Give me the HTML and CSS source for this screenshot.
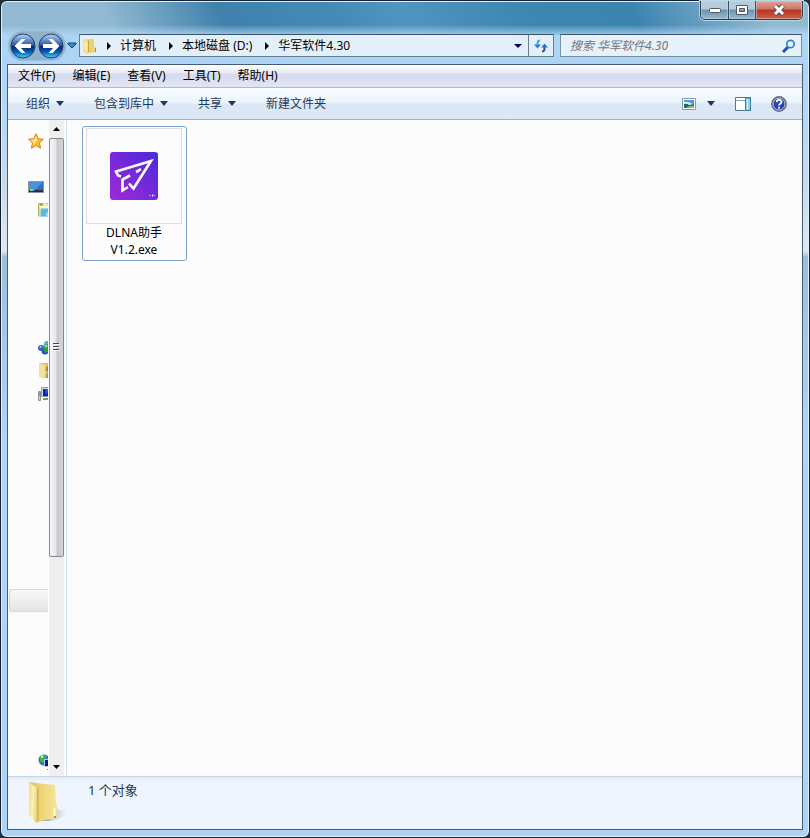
FILE: index.html
```html
<!DOCTYPE html>
<html lang="zh-CN">
<head>
<meta charset="utf-8">
<meta name="viewport" content="width=device-width, initial-scale=1">
<title>华军软件4.30</title>
<link rel="stylesheet" href="styles.css">
</head>
<body>
<div class="window">
  <header class="titlebar">
    <div class="controls">
      <button type="button" aria-label="最小化"><svg width="14" height="8" viewBox="0 0 14 8"><rect x="1.500" y="2.500" width="11" height="4" rx="1" fill="#fff" stroke="#4d5867"/></svg></button>
      <button type="button" aria-label="最大化"><svg width="14" height="12" viewBox="0 0 14 12"><path d="M1.500 1.500h11v9h-11zM4.500 4.500v3h5v-3z" fill="#fff" fill-rule="evenodd" stroke="#4d5867"/></svg></button>
      <button type="button" class="close" aria-label="关闭"><svg width="14" height="12" viewBox="0 0 14 12"><path d="M3 2l8 8M11 2l-8 8" stroke="#594850" stroke-width="5"/><path d="M3 2l8 8M11 2l-8 8" stroke="#fff" stroke-width="3"/></svg></button>
    </div>
  </header>

  <div class="navbar">
    <div class="travel">
      <svg class="disc-defs" width="0" height="0" aria-hidden="true"><defs>
        <linearGradient id="disc" x2="0" y2="1"><stop stop-color="#bdd3ef"/><stop offset=".25" stop-color="#6a91cb"/><stop offset=".49" stop-color="#244f9d"/><stop offset=".52" stop-color="#09276e"/><stop offset=".75" stop-color="#075bb4"/><stop offset="1" stop-color="#3edcff"/></linearGradient>
        <linearGradient id="gold" x2="1"><stop stop-color="#dfbd5c"/><stop offset=".5" stop-color="#f0d67b"/><stop offset="1" stop-color="#f7e494"/></linearGradient>
        <linearGradient id="cover" x2="1" y2=".3"><stop stop-color="#f3dc83"/><stop offset=".6" stop-color="#fbf0b6"/><stop offset="1" stop-color="#efd677"/></linearGradient>
      </defs></svg>
      <button type="button" aria-label="后退"><svg width="26" height="26" viewBox="0 0 26 26"><circle cx="13" cy="13" r="12" fill="url(#disc)" stroke="#243e76"/><path d="M4.500 13l7-7h4l-4.500 5h10v4h-10l4.500 5h-4z" fill="#fff"/></svg></button>
      <button type="button" aria-label="前进"><svg width="26" height="26" viewBox="0 0 26 26"><circle cx="13" cy="13" r="12" fill="url(#disc)" stroke="#243e76"/><path d="M21.500 13l-7-7h-4l4.500 5h-10v4h10l-4.500 5h4z" fill="#fff"/></svg></button>
    </div>
    <button type="button" class="recent" aria-label="最近的页面"><svg width="10" height="7" viewBox="0 0 10 7"><path d="M1 1h8v1L5 6 1 2z" fill="#468ac6" stroke="#123f6e"/></svg></button>
    <nav class="address" aria-label="地址">
      <svg class="folder" width="14" height="16" viewBox="0 0 14 16"><path d="M3 1h7l1 1v12l-6 1z" fill="#ecd174"/><path d="M5 3l1-1v12l-1 1z" fill="#c9a643"/><path d="M0 1l5 1v14l-5-2z" fill="#f3dd88"/><path d="M1 3l3 1v9l-3-1z" fill="#f9eaa9"/><path d="M10 8l3 1v5l-3 1z" fill="#f0d57c"/><path d="M12.500 10v4" stroke="#4ba0dd"/></svg>
      <svg class="chev" width="4" height="8" viewBox="0 0 4 8"><path d="M0 0l4 4-4 4z"/></svg>
      <a href="#">计算机</a>
      <svg class="chev" width="4" height="8" viewBox="0 0 4 8"><path d="M0 0l4 4-4 4z"/></svg>
      <a href="#">本地磁盘 (D:)</a>
      <svg class="chev" width="4" height="8" viewBox="0 0 4 8"><path d="M0 0l4 4-4 4z"/></svg>
      <a href="#">华军软件4.30</a>
      <button type="button" class="history" aria-label="以前的位置"><svg width="8" height="4" viewBox="0 0 8 4"><path d="M0 0h8L4 4z" fill="#000062"/></svg></button>
      <button type="button" class="refresh" aria-label="刷新"><svg width="14" height="14" viewBox="0 0 14 14"><path d="M6 1.500C3.500 1.500 3.500 3 3.500 6" fill="none" stroke="#3fa3dc" stroke-width="2"/><path d="M0 5.500h7l-3.500 4z" fill="#2b7fca"/><path d="M8 12.500c2.500 0 2.500-1.500 2.500-4.500" fill="none" stroke="#2a4fa4" stroke-width="2"/><path d="M7 8.500h7l-3.500-4z" fill="#2f74c4"/></svg></button>
    </nav>
    <label class="search">
      <input type="text" aria-label="搜索" placeholder="搜索 华军软件4.30">
      <svg width="14" height="14" viewBox="0 0 14 14"><path d="M1 13l5-5" stroke="#2351a7" stroke-width="3"/><circle cx="8.500" cy="5" r="3.700" fill="#e9f7ff" stroke="#3181ca" stroke-width="1.700"/></svg>
    </label>
  </div>

  <div class="client">
    <nav class="menu" aria-label="菜单">
      <button type="button">文件(F)</button>
      <button type="button">编辑(E)</button>
      <button type="button">查看(V)</button>
      <button type="button">工具(T)</button>
      <button type="button">帮助(H)</button>
    </nav>

    <div class="toolbar">
      <button type="button">组织<svg width="8" height="5" viewBox="0 0 8 5"><path d="M0 0h8L4 5z"/></svg></button>
      <button type="button">包含到库中<svg width="8" height="5" viewBox="0 0 8 5"><path d="M0 0h8L4 5z"/></svg></button>
      <button type="button">共享<svg width="8" height="5" viewBox="0 0 8 5"><path d="M0 0h8L4 5z"/></svg></button>
      <button type="button">新建文件夹</button>
      <div class="views">
        <button type="button" aria-label="更改视图"><svg width="14" height="12" viewBox="0 0 14 12"><path d="M.5.5h13v11H.5z" fill="#fff" stroke="#8b98a8"/><path d="M2 2h10v8H2z" fill="#4a9bdc"/><path d="M2 4q5-1 10 3v1H2z" fill="#d8f2fc"/><path d="M2 6q3-1 5 1l5-1v4H2z" fill="#27665b"/><path d="M4 10q3-3 8-2v2z" fill="#83bd72"/></svg></button>
        <button type="button" aria-label="更多选项"><svg width="8" height="5" viewBox="0 0 8 5"><path d="M0 0h8L4 5z"/></svg></button>
        <button type="button" aria-label="预览窗格"><svg width="16" height="14" viewBox="0 0 16 14"><path d="M.5.500h15v13H.5z" fill="#fff" stroke="#55779b"/><path d="M1 3.500h9" stroke="#8a9caf"/><path d="M10.500 1v12.500h5V1z" fill="#8fd5ec" stroke="#477895"/><path d="M12.500 2v10" stroke="#d2f5fc"/></svg></button>
        <button type="button" aria-label="帮助"><svg width="16" height="16" viewBox="0 0 16 16"><circle cx="8" cy="8" r="7.200" fill="#2849b5" stroke="#686d7c" stroke-width="1.400"/><circle cx="8" cy="8" r="6" fill="#2445b4" stroke="#c3c9db"/><path d="M5.700 6.200c0-3 4.800-3 4.800-.2C10.500 8 8 7.600 8 9.500M8 10.800v1.700" fill="none" stroke="#fff" stroke-width="1.800"/></svg></button>
      </div>
    </div>

    <div class="body">
      <aside class="sidebar">
        <ul class="tree">
          <li class="favorites"><a href="#" aria-label="收藏夹"><svg width="16" height="16" viewBox="0 0 16 16"><path d="M8 .7l2.200 5 5.200.5-3.900 3.700 1.100 5.300L8 12.500l-4.600 2.700 1.100-5.300L.6 6.200l5.200-.5z" fill="#ffb92e" stroke="#d9812b"/><path d="M8 3l1.500 4-5 6 1.200-3.500L2.500 7l4-.5z" fill="#ffe992"/></svg></a></li>
          <li class="desktop"><a href="#" aria-label="桌面"><svg width="16" height="14" viewBox="0 0 16 14"><path d="M.5 1.500h15v11H.5z" fill="#2f6fc0" stroke="#8a949e"/><path d="M1 2h14L7 10H1z" fill="#4b91dd"/><path d="M1 10h14v2H1z" fill="#233142"/><path d="M2 9h2v2H2z" fill="#8be261"/><path d="M4 9h2v2H4z" fill="#51bdf0"/></svg></a></li>
          <li class="library child"><a href="#" aria-label="库"><svg width="16" height="16" viewBox="0 0 16 16"><path d="M.5 3V1.500h9L11 3h4v11H.5z" fill="#f0dc85" stroke="#c4ab50"/><path d="M2 2.500h7" stroke="#fff7c4" stroke-width="2"/><path d="M2 2.500h3" stroke="#58b947" stroke-width="2"/><path d="M2 5h12" stroke="#fff7c4" stroke-width="2"/><path d="M2.500 14.500V8l2-1.500h11V11h-7v3.500z" fill="#63b6dc" stroke="#9dd9ef"/></svg></a></li>
          <li class="homegroup child"><a href="#" aria-label="家庭组"><svg width="16" height="16" viewBox="0 0 16 16"><circle cx="9" cy="4" r="3" fill="#6da1dd"/><circle cx="3" cy="8" r="3" fill="#3663b7"/><circle cx="7" cy="11" r="3.500" fill="#2a56b8"/><circle cx="9" cy="8" r="4" fill="#27a044"/><circle cx="8" cy="6" r="1.500" fill="#9be28c"/><circle cx="2.500" cy="7" r="1" fill="#b2d5ff"/></svg></a></li>
          <li class="user child"><a href="#" aria-label="用户文件夹"><svg width="16" height="16" viewBox="0 0 16 16"><path d="M1 0h9l1 1h4v14H6z" fill="#e1c168"/><path d="M1 0l6 2v14l-6-2z" fill="#f5e193"/><circle cx="11" cy="6" r="3" fill="#a67f53"/><path d="M8 15c0-8 7-8 7 0z" fill="#65a996"/></svg></a></li>
          <li class="computer child"><a href="#" aria-label="计算机"><svg width="16" height="16" viewBox="0 0 16 16"><path d="M.5 5.500h2v9h-2z" fill="#ccd2d4" stroke="#8a9296"/><path d="M1 7h1M1 9h1" stroke="#547553"/><path d="M3.500 1.500h12v9h-12z" fill="#d6dadd" stroke="#929aa3"/><path d="M5 3h10v7H5z" fill="#081eb4"/><path d="M7 3h5l-4 6z" fill="#2f50d8"/><path d="M5 12h9v2H5z" fill="#858d94"/></svg></a></li>
          <li class="current" aria-current="true"><a href="#" aria-label="华军软件4.30"></a></li>
          <li class="network child"><a href="#" aria-label="网络"><svg width="16" height="16" viewBox="0 0 16 16"><circle cx="6" cy="6" r="5.500" fill="#2676c9"/><path d="M2 3l4-2 3 2-2 2-2 4-3-2zM6 9l4-2v4H7z" fill="#3cbd52"/><path d="M3 3l2-1" stroke="#c5f5e9" stroke-width="2"/><path d="M6.500 5.500h9v7h-9z" fill="#071794" stroke="#bfcbd8"/><path d="M9 15.500h6" stroke="#667384"/></svg></a></li>
        </ul>
        <div class="scrollbar">
          <button type="button" aria-label="向上滚动"><svg width="7" height="4" viewBox="0 0 7 4"><path d="M0 4h7L3.500 0z"/></svg></button>
          <div class="track"><div class="thumb"><svg width="7" height="9" viewBox="0 0 7 9"><path d="M0 .5h6M0 3.500h6M0 6.500h6" stroke="#45454b"/><path d="M1 1.500h6M1 4.500h6M1 7.500h6" stroke="#f9f9fa"/></svg></div></div>
          <button type="button" aria-label="向下滚动"><svg width="7" height="4" viewBox="0 0 7 4"><path d="M0 0h7L3.500 4z"/></svg></button>
        </div>
      </aside>
      <main class="files">
        <button type="button" class="file">
          <span class="thumbnail"><svg width="48" height="48" viewBox="0 0 48 48"><defs><linearGradient id="app" x1="0" y1="1" x2="1" y2="0"><stop stop-color="#a128d8"/><stop offset="1" stop-color="#4a2bdb"/></linearGradient></defs><rect width="48" height="48" rx="3" fill="url(#app)"/><path d="M11 24.500L8 23.500 6 19.500 41 9 23.500 36.500 19 31.500M20 23.500L12.500 27.500V38.500L18 35M26 20l3-1.500M28.500 18.500l2.500-1.500" fill="none" stroke="#fff" stroke-width="2.600"/><path d="M39 43.500h2M42 43.500h3M42.500 42v3" stroke="#d8b9fa" stroke-opacity=".8"/></svg></span>
          <span class="filename">DLNA助手<br>V1.2.exe</span>
        </button>
      </main>
    </div>

    <footer class="details">
      <svg width="40" height="44" viewBox="0 0 40 44"><defs><linearGradient id="shade" x2="1"><stop stop-color="#777f89" stop-opacity=".8"/><stop offset="1" stop-color="#a7b4c4" stop-opacity="0"/></linearGradient></defs><path d="M13 40l14-13 13 4q-5 7-18 9z" fill="url(#shade)"/><path d="M1 1l15 2 11 1 1 20 1 3v10l-3 2-5-1-12 3z" fill="url(#gold)"/><path d="M1 1l8 6v36l-8-9z" fill="url(#cover)"/><path d="M9.500 7v34" stroke="#d3b156"/><path d="M10 7l1 1v32l-1 1z" fill="#dfbf60"/><path d="M25 25l4-1v13l-3 1z" fill="#f5df8c"/><path d="M26.500 27v8" stroke="#fff9dc" stroke-width="2"/><path d="M26 36h2" stroke="#56a9dd" stroke-width="2"/></svg>
      <p>1 个对象</p>
    </footer>
  </div>
</div>
</body>
</html>
```
FILE: styles.css
```css
* { box-sizing: border-box; }

body {
  margin: 0;
  background: #25313e;
  font: 12px/16px "Noto Sans", "Noto Sans CJK SC", sans-serif;
  color: #000;
}

button, input { font: inherit; color: inherit; }
button { padding: 0; border: 0; background: none; }
a { color: inherit; text-decoration: none; }
svg { display: block; flex: none; }

.window {
  display: flex;
  flex-direction: column;
  min-height: 100vh;
  padding: 0 6px 7px;
  border: 1px solid #14202e;
  border-radius: 7px;
  box-shadow: inset 0 0 0 1px #e0f2fc;
  background:
    linear-gradient(to bottom, transparent 24px, #add5f4 36px, transparent 60px) top / 100% 60px no-repeat,
    linear-gradient(65deg, transparent 14%, #3f81ab 28%, #458bb6 42%, #5095be 50%, #3f87b1 64%, #3c84b0 78%, transparent 94%) top / 100% 34px no-repeat,
    linear-gradient(to bottom, #91b9d1 0, #91b9d1 28px, #b0d6f3 40px, #add4f5 64px, #c5daee 180px, #e0e8f1 250px, #9dbddb 256px, #b0d4f8 440px, #add2f6 100%);
}

.titlebar { display: flex; justify-content: flex-end; height: 30px; }
.controls {
  display: flex;
  height: 19px;
  border: 1px solid #263e52;
  border-top: 0;
  border-radius: 0 0 5px 5px;
  overflow: hidden;
  box-shadow: 0 0 0 1px #b9d6e7;
}
.controls button {
  display: grid;
  place-items: center;
  width: 28px;
  border-right: 1px solid #344b61;
  background: linear-gradient(#b5cbd9 0 45%, #6b91aa 50%, #94bdd1);
  box-shadow: inset 0 0 0 1px #c9dce780;
}
.controls button + button { width: 27px; }
.controls button.close {
  width: 46px;
  border: 0;
  background: linear-gradient(#dea397, #cb7768 45%, #b63520 50%, #cf604b);
}

.navbar { display: flex; align-items: center; height: 33px; padding: 0 1px 4px 2px; }
.travel {
  display: flex;
  gap: 2px;
  padding: 1px;
  border-radius: 14px;
  background: #8fb2cc;
  box-shadow: 0 0 2px #688ca8;
}
.disc-defs { position: absolute; }
.recent { display: grid; place-items: center; width: 14px; height: 20px; }
.address {
  display: flex;
  flex: 1;
  align-items: center;
  height: 23px;
  border: 1px solid #667e92;
  border-top-color: #3c5468;
  background: #e4f0f9;
  white-space: nowrap;
}
.folder { margin: 0 10px 0 3px; }
.address .chev { margin: 0 9px 0 0; }
.address a { margin-right: 13px; }
.history { display: grid; place-items: center; width: 20px; height: 20px; margin-left: auto; }
.refresh {
  display: grid;
  place-items: center;
  width: 25px;
  height: 21px;
  border-left: 1px solid #667e92;
}
.search {
  display: flex;
  flex: 0 1 242px;
  align-items: center;
  height: 23px;
  margin-left: 6px;
  padding: 0 5px 0 9px;
  border: 1px solid #7891a3;
  border-top-color: #3c5468;
  background: #e6f1fa;
}
.search input {
  flex: 1;
  min-width: 0;
  padding: 0;
  border: 0;
  outline: 0;
  background: none;
  font-style: italic;
}
.search input::placeholder { color: #72777c; opacity: 1; }

.client {
  display: flex;
  flex: 1;
  flex-direction: column;
  border: 1px solid #465c70;
  background: #fcfcfc;
}
.menu {
  display: flex;
  gap: 17px;
  height: 23px;
  padding: 0 10px;
  border-bottom: 1px solid #b4b8cd;
  background: linear-gradient(#fff, #e5e9f4 8px, #d6dbed 9px, #e1e5f3);
}
.toolbar {
  display: flex;
  gap: 30px;
  height: 32px;
  padding: 0 15px 0 18px;
  border-bottom: 1px solid #a0afc3;
  background: linear-gradient(#fafdff, #e9f3fc 15px, #dce7f5 16px, #dde8f6);
  color: #1e395b;
}
.toolbar button { display: flex; align-items: center; gap: 6px; }
.toolbar svg { fill: #1e395b; }
.views { display: flex; margin-left: auto; }
.views button { margin-left: 11px; }
.views button:nth-child(n+3) { margin-left: 20px; }

.body { display: flex; flex: 1; min-height: 280px; }
.sidebar { display: flex; width: 59px; border-right: 1px solid #d1e5f5; }
.tree {
  display: grid;
  flex: 1;
  grid-auto-rows: 23px;
  align-content: start;
  margin: 0;
  padding: 9px 1px 0 1px;
  overflow: hidden;
  list-style: none;
}
.tree li { overflow: hidden; }
.tree a { display: flex; align-items: center; height: 23px; padding-left: 19px; }
.tree .child a { padding-left: 29px; }
.tree .favorites { grid-row: 1; }
.tree .desktop { grid-row: 3; }
.tree .library { grid-row: 4; }
.tree .homegroup { grid-row: 10; }
.tree .user { grid-row: 11; }
.tree .computer { grid-row: 12; }
.tree .current {
  grid-row: 21;
  border: 1px solid #d9d9d9;
  border-right: 0;
  border-radius: 3px 0 0 3px;
  background: linear-gradient(#f8f8f8, #e5e5e5);
}
.tree .network { grid-row: 28; }
.scrollbar {
  display: flex;
  flex: none;
  flex-direction: column;
  width: 15px;
  margin-right: 2px;
  background: #efefef;
}
.scrollbar button { display: grid; place-items: center; height: 18px; }
.track { flex: 1; }
.thumb {
  display: grid;
  place-items: center;
  height: 67.5%;
  border: 1px solid #85888d;
  border-radius: 2px;
  background: linear-gradient(90deg, #f7f7f7, #e6e6e8 48%, #c5c6ca 52%, #d5d6d9);
}

.files { flex: 1; padding: 6px 15px; }
.file {
  display: block;
  width: 105px;
  height: 135px;
  padding: 0 4px 2px 3px;
  border: 1px solid #7da2ce;
  border-radius: 3px;
}
.thumbnail {
  display: grid;
  place-items: center;
  height: 96px;
  border: 1px solid #dedede;
}
.filename { display: block; line-height: 17px; }

.details {
  display: flex;
  gap: 20px;
  height: 53px;
  padding: 4px 20px;
  border-top: 1px solid #c4d5e7;
  background: linear-gradient(#e2eaf5, #f0f4fc 4px);
  color: #1e395b;
}
.details p { margin: 1px 0 0; font-size: 13px; }
```
